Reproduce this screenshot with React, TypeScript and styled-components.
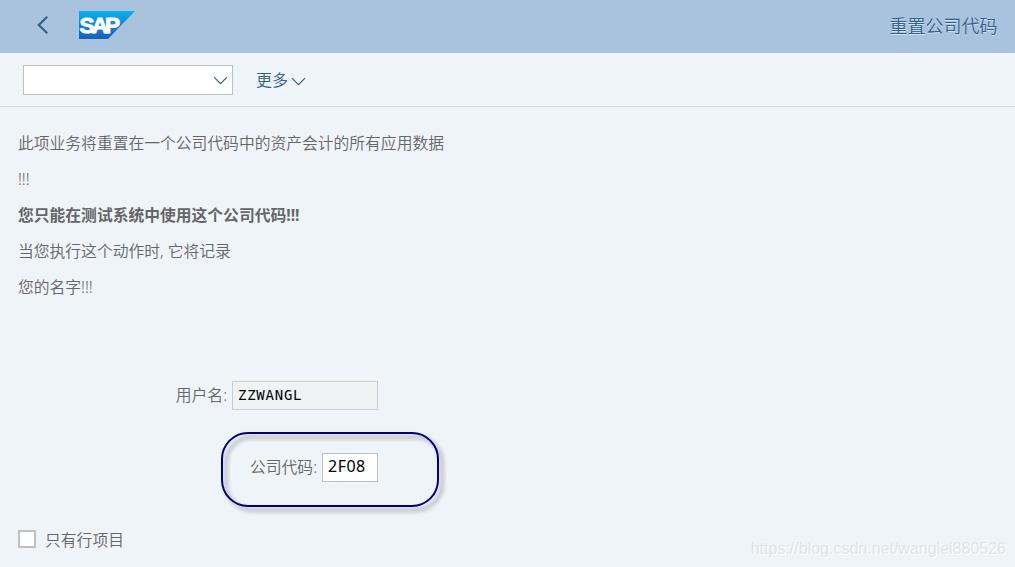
import React from 'react'
import styled, { createGlobalStyle } from 'styled-components'

const GlobalStyle = createGlobalStyle`
  * {
    box-sizing: border-box;
  }

  body {
    margin: 0;
    background-color: #eff4f9;
    color: #666666;
    font-family: 'Noto Sans', 'Noto Sans CJK SC', sans-serif;
    font-size: 15.8px;
  }
`

const Page = styled.div`
  position: relative;
  display: flex;
  flex-direction: column;
  height: 567px;
  overflow: hidden;
`

const Header = styled.header`
  display: flex;
  align-items: center;
  height: 53px;
  padding: 0 17.5px 3px 36px;
  background-color: #a9c3df;
`

const BackButton = styled.button`
  display: flex;
  width: 14px;
  height: 20px;
  margin-right: 29px;
  padding: 0;
  border: 0;
  background: none;
`

const Title = styled.h1`
  margin: 1px 0 0 auto;
  color: #346187;
  font-size: 18px;
  font-weight: 350;
  line-height: 26px;
  text-shadow: 0 1px 0 rgba(255, 255, 255, 0.5);
`

const Toolbar = styled.div`
  display: flex;
  align-items: center;
  height: 54px;
  padding: 0 23px;
  border-bottom: 1px solid #c9dff1;
`

const CommandField = styled.div`
  display: flex;
  align-items: center;
  justify-content: flex-end;
  width: 210px;
  height: 30px;
  margin-right: 23px;
  padding: 2px 4px 0 0;
  border: 1px solid #bfbfbf;
  background-color: #ffffff;
`

const MoreButton = styled.button`
  display: flex;
  align-items: center;
  gap: 3px;
  padding: 0;
  border: 0;
  background: none;
  color: #346187;
  font: inherit;
  font-size: 16px;
  font-weight: 350;
  line-height: 24px;

  svg {
    margin-top: 3px;
  }
`

const Content = styled.main`
  display: flex;
  flex-direction: column;
  padding: 19px 18px 0;
`

const Line = styled.p<{ $strong?: boolean }>`
  height: 36px;
  margin: 0;
  font-weight: ${({ $strong }) => ($strong ? 700 : 350)};
  line-height: 34px;
  letter-spacing: -0.02px;
  white-space: pre;
`

const Form = styled.div`
  display: flex;
  flex-direction: column;
  gap: 36px;
  width: 360px;
  padding-top: 72px;
`

const FieldRow = styled.label`
  display: flex;
  align-items: center;
  justify-content: flex-end;
  gap: 5px;
  height: 36px;
  padding-bottom: 1px;
  font-weight: 350;
  line-height: 24px;
`

const FieldLabel = styled.span`
  margin-bottom: 2px;
`

const Input = styled.input`
  height: 29px;
  border: 1px solid #bfbfbf;
  border-radius: 0;
  outline: none;
  background-color: #ffffff;
  color: #000000;
`

const UserInput = styled(Input)`
  width: 146px;
  padding: 0 5px 2px;
  border-color: #cccccc;
  background-color: #f0f3f4;
  font-family: 'DejaVu Sans Mono', monospace;
  font-size: 14px;
  letter-spacing: 0.75px;
`

const CodeInput = styled(Input)`
  width: 56px;
  padding: 0 5px 4px;
  font-family: 'Noto Sans', sans-serif;
  font-size: 16px;
  letter-spacing: 0.5px;
`

const CheckRow = styled.label`
  display: flex;
  align-items: center;
  gap: 9px;
  height: 36px;
  margin-top: 36px;
  padding-bottom: 1px;
  font-weight: 350;
  line-height: 24px;
`

const Checkbox = styled.input`
  appearance: none;
  width: 18px;
  height: 18px;
  margin: 0 0 1px;
  border: 2px solid #bfbfbf;
  background-color: #ffffff;
`

/* Marker drawn over the company code field */
const Highlight = styled.div`
  position: absolute;
  top: 432px;
  left: 221px;
  width: 218px;
  height: 75px;
  border: 2px solid #000080;
  border-radius: 27px;
  filter: drop-shadow(4px 4px 2px rgba(0, 0, 0, 0.4));
  pointer-events: none;
`

const Watermark = styled.span`
  position: absolute;
  right: 9px;
  bottom: 8px;
  color: #dfe3e7;
  font-family: 'Liberation Sans', sans-serif;
  font-size: 16px;
  line-height: 20px;
  text-shadow: 1px 1px 0 #ffffff;
`

const ChevronDown = () => (
  <svg width="15" height="9" viewBox="0 0 15 9" fill="none" stroke="#346187" strokeWidth="1.2">
    <path d="M1 1.2 7.5 7.7 14 1.2" />
  </svg>
)

const BackIcon = () => (
  <svg width="14" height="20" viewBox="0 0 14 20" fill="none" stroke="#346187" strokeWidth="2.2">
    <path d="M11.3 1.7 2.8 10l8.5 8.3" />
  </svg>
)

const SapLogo = () => (
  <svg width="57" height="28" viewBox="0 0 57 28">
    <defs>
      <linearGradient id="sap" x1="0" y1="0" x2="0" y2="1">
        <stop offset="0" stopColor="#05b4ee" />
        <stop offset="0.5" stopColor="#1186d3" />
        <stop offset="1" stopColor="#1e5bb8" />
      </linearGradient>
    </defs>
    <path d="M0 0h56L29 28H0z" fill="url(#sap)" />
    <text
      x="0.5"
      y="22"
      fill="#ffffff"
      stroke="#ffffff"
      strokeWidth="1"
      fontFamily="Liberation Sans, sans-serif"
      fontSize="22.5"
      fontWeight="700"
      textLength="40.5"
      lengthAdjust="spacing"
    >
      SAP
    </text>
  </svg>
)

const App: React.FC = () => {
  return (
    <>
      <GlobalStyle />
      <Page>
        <Header>
          <BackButton aria-label="返回">
            <BackIcon />
          </BackButton>
          <SapLogo />
          <Title>重置公司代码</Title>
        </Header>
        <Toolbar>
          <CommandField>
            <ChevronDown />
          </CommandField>
          <MoreButton>
            更多
            <ChevronDown />
          </MoreButton>
        </Toolbar>
        <Content>
          <Line>此项业务将重置在一个公司代码中的资产会计的所有应用数据</Line>
          <Line>!!!</Line>
          <Line $strong>您只能在测试系统中使用这个公司代码!!!</Line>
          <Line>当您执行这个动作时, 它将记录</Line>
          <Line>您的名字!!!</Line>
          <Form>
            <FieldRow>
              <FieldLabel>用户名:</FieldLabel>
              <UserInput defaultValue="ZZWANGL" readOnly />
            </FieldRow>
            <FieldRow>
              <FieldLabel>公司代码:</FieldLabel>
              <CodeInput defaultValue="2F08" />
            </FieldRow>
          </Form>
          <CheckRow>
            <Checkbox type="checkbox" />
            只有行项目
          </CheckRow>
        </Content>
        <Highlight />
        <Watermark>https://blog.csdn.net/wanglei880526</Watermark>
      </Page>
    </>
  )
}

export default App
